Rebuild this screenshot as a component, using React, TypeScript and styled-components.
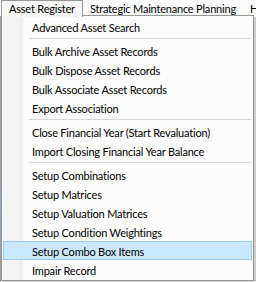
import React from 'react';
import styled, { createGlobalStyle } from 'styled-components';

type MenuEntry = { label: string; highlighted?: boolean } | 'separator';

const topItems = ['Asset Register', 'Strategic Maintenance Planning', 'H'];

const entries: MenuEntry[] = [
  { label: 'Advanced Asset Search' },
  'separator',
  { label: 'Bulk Archive Asset Records' },
  { label: 'Bulk Dispose Asset Records' },
  { label: 'Bulk Associate Asset Records' },
  { label: 'Export Association' },
  'separator',
  { label: 'Close Financial Year (Start Revaluation)' },
  { label: 'Import Closing Financial Year Balance' },
  'separator',
  { label: 'Setup Combinations' },
  { label: 'Setup Matrices' },
  { label: 'Setup Valuation Matrices' },
  { label: 'Setup Condition Weightings' },
  { label: 'Setup Combo Box Items', highlighted: true },
  { label: 'Impair Record' },
];

export default function App() {
  return (
    <>
      <GlobalStyle />
      <Page>
        <MenuBar>
          {topItems.map((item, i) => (
            <TopItem key={item} $open={i === 0}>
              {item}
            </TopItem>
          ))}
        </MenuBar>
        <DropArea>
          <AppEdge />
          <Menu>
            {entries.map((entry, i) =>
              entry === 'separator' ? (
                <Separator key={`sep-${i}`} />
              ) : (
                <MenuItem key={entry.label} $highlighted={!!entry.highlighted}>
                  {entry.label}
                </MenuItem>
              ),
            )}
          </Menu>
        </DropArea>
      </Page>
    </>
  );
}

const GlobalStyle = createGlobalStyle`
  html, body {
    margin: 0;
    padding: 0;
    background: #ffffff;
  }
  body {
    font-family: Lato, 'Noto Sans', sans-serif;
    font-size: 11px;
    letter-spacing: -0.2px;
    color: #000000;
  }
`;

const Page = styled.div`
  width: 256px;
  height: 282px;
  overflow: hidden;
  display: flex;
  flex-direction: column;
  background: #fbfbfb;
`;

const MenuBar = styled.div`
  display: flex;
  height: 16px;
  padding-left: 1px;
  background: #fbfbfb;
`;

const TopItem = styled.div<{ $open: boolean }>`
  position: relative;
  z-index: 1;
  box-sizing: border-box;
  height: ${(p) => (p.$open ? '17px' : '16px')};
  padding: 0 ${(p) => (p.$open ? '7px' : '6px')};
  line-height: 16px;
  white-space: nowrap;
  border: ${(p) => (p.$open ? '1px solid #979797' : '1px solid transparent')};
  border-bottom: none;
  background: ${(p) => (p.$open ? '#f6f6f6' : 'transparent')};
`;

const DropArea = styled.div`
  display: flex;
  flex: 1;
`;

const AppEdge = styled.div`
  width: 1px;
  background: linear-gradient(to bottom, #a0a0a0 0, #a0a0a0 60%, #8fa4c8 70%, #a0a0a0 100%);
`;

const Menu = styled.div`
  box-sizing: border-box;
  width: 253px;
  height: 266px;
  margin-top: -1px;
  padding: 1px;
  border: 1px solid #979797;
  background: linear-gradient(to right, #f6f6f6 0, #f1f1f1 18px, #ececec 20px, #fcfcfc 22px, #fcfcfc 100%);
  box-shadow: 2px 2px 1px rgba(0, 0, 0, 0.18);
`;

const MenuItem = styled.div<{ $highlighted: boolean }>`
  box-sizing: border-box;
  height: 19px;
  padding-left: 28px;
  line-height: 19px;
  white-space: nowrap;
  border: 1px solid ${(p) => (p.$highlighted ? '#99ccff' : 'transparent')};
  background: ${(p) => (p.$highlighted ? '#cce8ff' : 'transparent')};
`;

const Separator = styled.div`
  height: 1px;
  margin: 2px 1px 2px 26px;
  background: #d7d7d7;
`;
